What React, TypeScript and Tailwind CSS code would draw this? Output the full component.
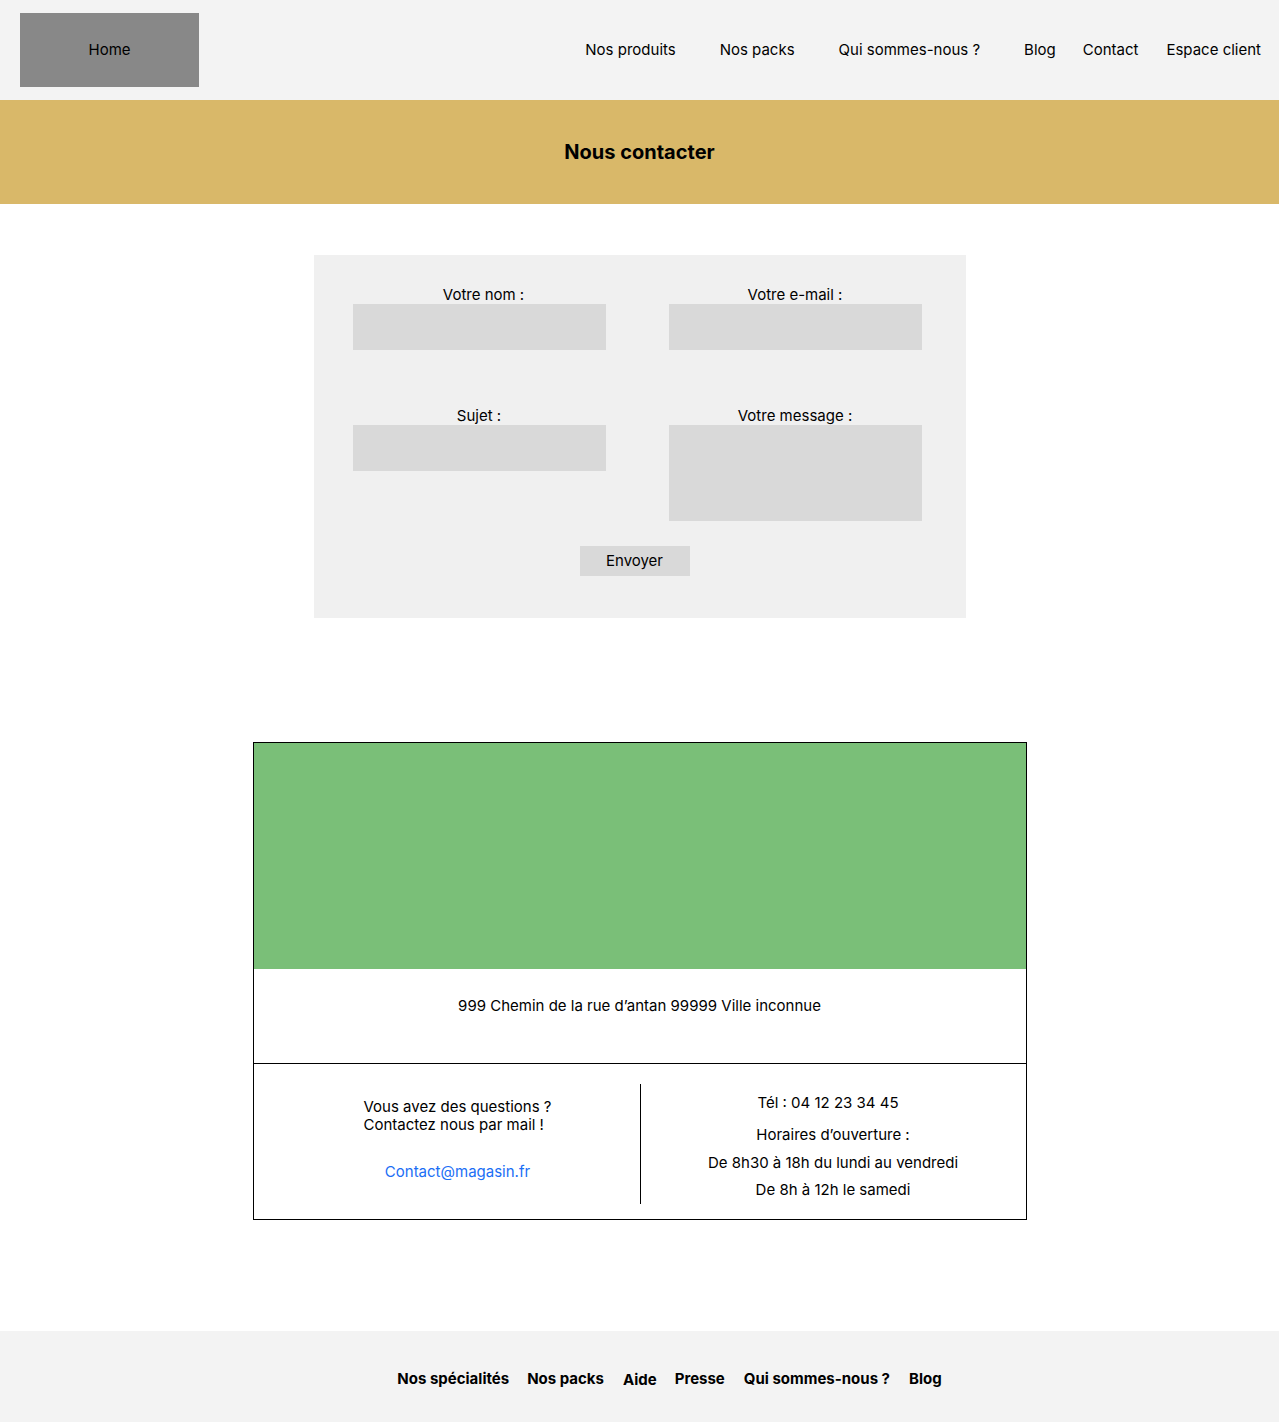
import React from "react";

export default function App() {
  const font = { fontFamily: "Inter, 'Noto Sans', sans-serif" };
  return (
    <div className="w-[1279px] min-h-[1422px] bg-white text-black flex flex-col" style={font}>
      {/* Header */}
      <header className="h-[100px] bg-[#f3f3f3] flex items-center pl-[20px] pr-[18px]">
        <div className="w-[179px] h-[74px] bg-[#888888] flex items-center justify-center text-[15px] leading-[18px]">
          Home
        </div>
        <nav className="ml-auto flex items-center text-[15px] leading-[18px]">
          <span>Nos produits</span>
          <span className="ml-[44px]">Nos packs</span>
          <span className="ml-[44px]">Qui sommes-nous ?</span>
          <span className="ml-[44px]">Blog</span>
          <span className="ml-[27px]">Contact</span>
          <span className="ml-[28px]">Espace client</span>
        </nav>
      </header>

      {/* Banner */}
      <div className="h-[104px] bg-[#d9b869] flex items-center justify-center">
        <h1 className="text-[20px] leading-[24px] font-bold">Nous contacter</h1>
      </div>

      {/* Form */}
      <div className="flex justify-center mt-[51px]">
        <div className="w-[652px] h-[363px] bg-[#f0f0f0] pl-[39px] pr-[44px] pt-[30px] flex flex-col">
          <div className="grid grid-cols-[253px_253px] gap-x-[63px]">
            <div className="flex flex-col">
              <label className="text-[15px] leading-[19px] text-center pl-[9px]">Votre nom :</label>
              <div className="h-[46px] bg-[#d9d9d9]" />
            </div>
            <div className="flex flex-col">
              <label className="text-[15px] leading-[19px] text-center">Votre e-mail :</label>
              <div className="h-[46px] bg-[#d9d9d9]" />
            </div>
            <div className="flex flex-col mt-[56px]">
              <label className="text-[15px] leading-[19px] text-center">Sujet :</label>
              <div className="h-[46px] bg-[#d9d9d9]" />
            </div>
            <div className="flex flex-col mt-[56px]">
              <label className="text-[15px] leading-[19px] text-center">Votre message :</label>
              <div className="h-[96px] bg-[#d9d9d9]" />
            </div>
          </div>
          <div className="flex justify-center mt-[25px] pr-[5px]">
            <div className="w-[110px] h-[30px] bg-[#d9d9d9] flex items-center justify-center text-[15px] leading-[18px]">
              Envoyer
            </div>
          </div>
        </div>
      </div>

      {/* Map card */}
      <div className="flex justify-center mt-[124px]">
        <div className="w-[774px] border border-black flex flex-col">
          <div className="h-[226px] bg-[#7abf78]" />
          <div className="h-[94px] pt-[28px] text-center text-[15px] leading-[18px]">
            999 Chemin de la rue d’antan 99999 Ville inconnue
          </div>
          <div className="border-t border-black h-[156px] flex">
            <div className="w-[386px] shrink-0 flex justify-center pl-[22px] pt-[34px]">
              <div className="flex flex-col text-[15px] leading-[18px]">
                <div>Vous avez des questions ?</div>
                <div>Contactez nous par mail !</div>
                <div className="text-center text-[#1a6ef5] mt-[29px]">Contact@magasin.fr</div>
              </div>
            </div>
            <div className="w-px shrink-0 bg-black mt-[20px] mb-[15px]" />
            <div className="flex-1 flex flex-col items-center pt-[30px] text-[15px] leading-[18px] text-center">
              <div className="pr-[10px]">Tél : 04 12 23 34 45</div>
              <div className="mt-[14px]">Horaires d’ouverture :</div>
              <div className="mt-[10px]">De 8h30 à 18h du lundi au vendredi</div>
              <div className="mt-[9px]">De 8h à 12h le samedi</div>
            </div>
          </div>
        </div>
      </div>

      {/* Footer */}
      <footer className="mt-[111px] h-[91px] bg-[#f3f3f3] flex items-center justify-center pl-[60px] pt-[4px] text-[15px] leading-[18px] font-bold">
        <span>Nos spécialités</span>
        <span className="ml-[18px]">Nos packs</span>
        <span className="ml-[19px] mt-[2px]">Aide</span>
        <span className="ml-[18px]">Presse</span>
        <span className="ml-[19px]">Qui sommes-nous ?</span>
        <span className="ml-[19px]">Blog</span>
      </footer>
    </div>
  );
}
